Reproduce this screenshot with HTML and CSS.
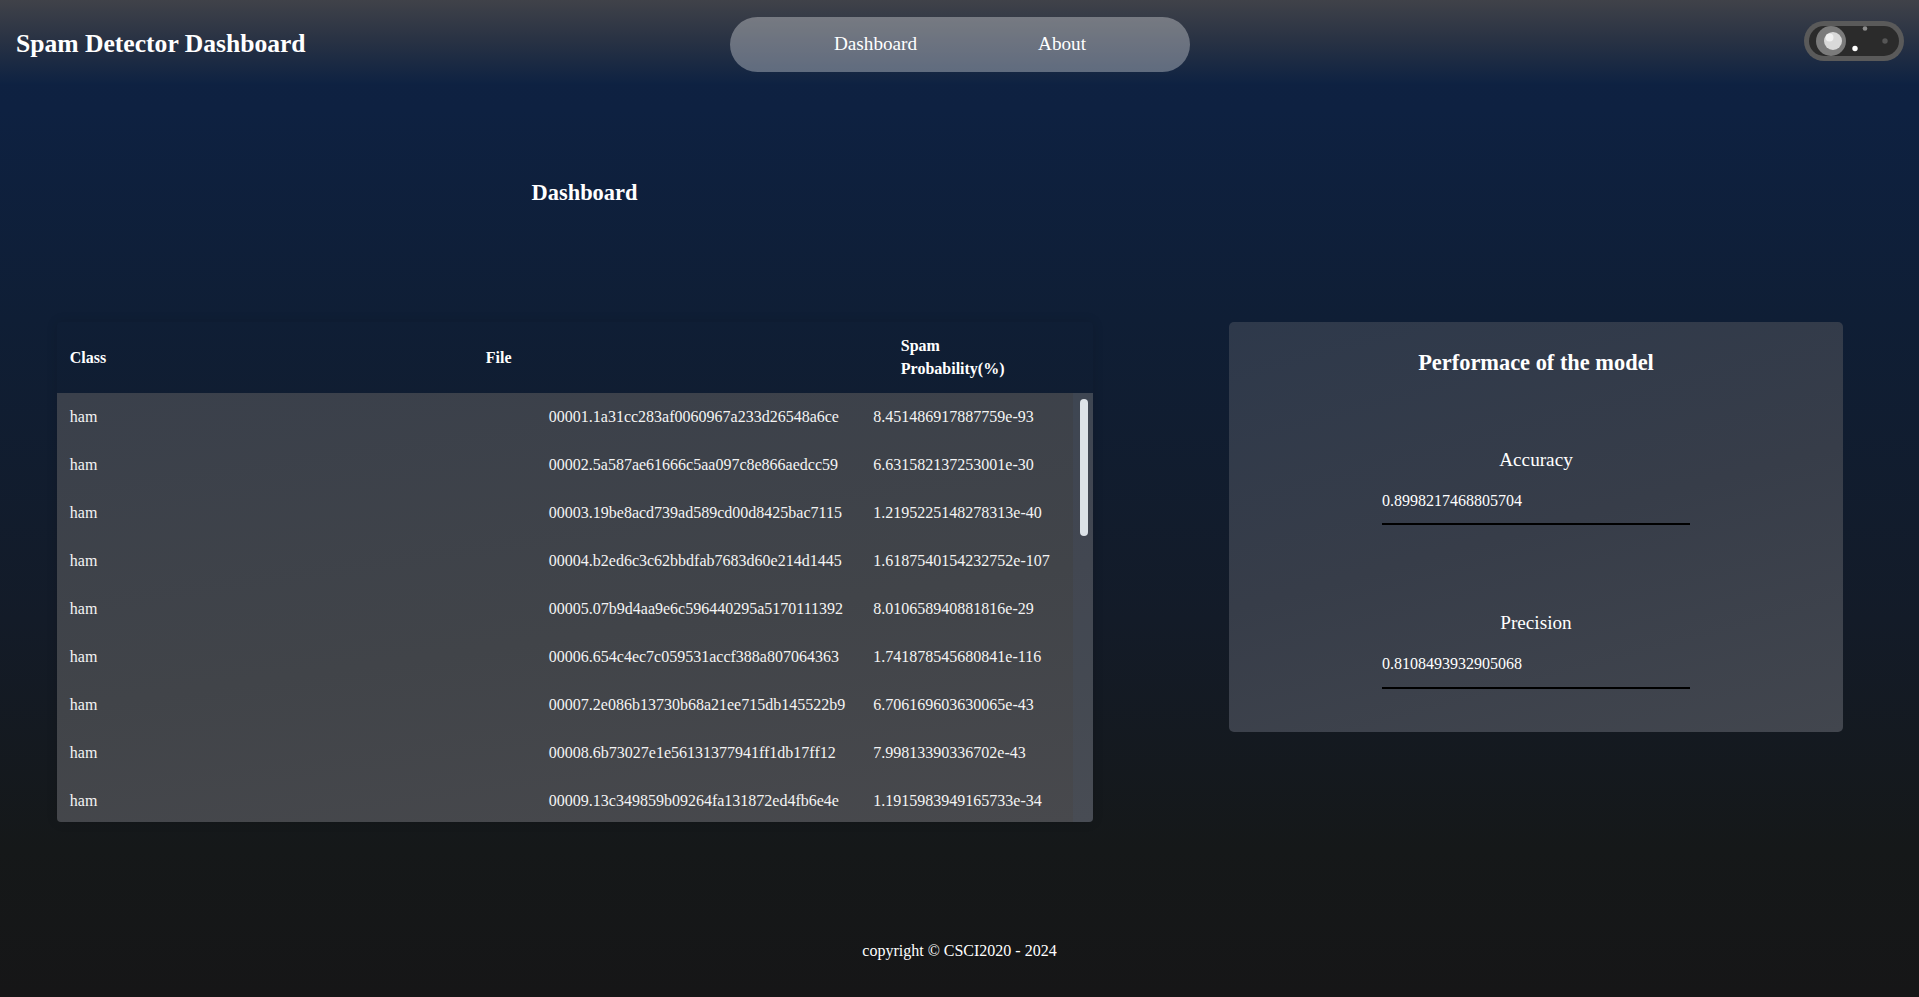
FILE: index.html
```html
<!DOCTYPE html>
<html lang="en">
<head>
<meta charset="utf-8">
<title>Spam Detector Dashboard</title>
<link rel="stylesheet" href="styles.css">
</head>
<body>
<header class="topbar">
  <h1 class="brand">Spam Detector Dashboard</h1>
  <nav class="nav-pill">
    <a href="#" class="nav-link">Dashboard</a>
    <a href="#" class="nav-link">About</a>
  </nav>
  <div class="theme-toggle" aria-label="Toggle theme">
    <svg width="100" height="40" viewBox="0 0 100 40">
      <rect x="0" y="0" width="100" height="40" rx="20" fill="#5a5a5a"/>
      <rect x="5" y="5" width="90" height="30" rx="15" fill="#2b2b2b"/>
      <circle cx="27" cy="20" r="15" fill="#7b7b7b"/>
      <circle cx="29" cy="20" r="9" fill="#d9d9d9"/>
      <circle cx="25.5" cy="16.5" r="4" fill="#f5f5f5" opacity="0.85"/>
      <circle cx="61" cy="7.5" r="2.3" fill="#8c8c8c"/>
      <circle cx="51" cy="27.5" r="2.7" fill="#ffffff"/>
      <circle cx="81" cy="20" r="2.7" fill="#565656"/>
    </svg>
  </div>
</header>

<main class="main">
  <h2 class="page-title">Dashboard</h2>
  <div class="content">
    <section class="table-card">
      <table class="head-table">
        <colgroup><col class="hc1"><col class="hc2"><col></colgroup>
        <thead>
          <tr><th>Class</th><th>File</th><th class="prob-head">Spam Probability(%)</th></tr>
        </thead>
      </table>
      <div class="body-scroll">
        <table class="body-table">
          <colgroup><col class="bc1"><col class="bc2"><col></colgroup>
          <tbody>
            <tr><td>ham</td><td>00001.1a31cc283af0060967a233d26548a6ce</td><td>8.451486917887759e-93</td></tr>
            <tr><td>ham</td><td>00002.5a587ae61666c5aa097c8e866aedcc59</td><td>6.631582137253001e-30</td></tr>
            <tr><td>ham</td><td>00003.19be8acd739ad589cd00d8425bac7115</td><td>1.2195225148278313e-40</td></tr>
            <tr><td>ham</td><td>00004.b2ed6c3c62bbdfab7683d60e214d1445</td><td>1.6187540154232752e-107</td></tr>
            <tr><td>ham</td><td>00005.07b9d4aa9e6c596440295a5170111392</td><td>8.010658940881816e-29</td></tr>
            <tr><td>ham</td><td>00006.654c4ec7c059531accf388a807064363</td><td>1.741878545680841e-116</td></tr>
            <tr><td>ham</td><td>00007.2e086b13730b68a21ee715db145522b9</td><td>6.706169603630065e-43</td></tr>
            <tr><td>ham</td><td>00008.6b73027e1e56131377941ff1db17ff12</td><td>7.99813390336702e-43</td></tr>
            <tr><td>ham</td><td>00009.13c349859b09264fa131872ed4fb6e4e</td><td>1.1915983949165733e-34</td></tr>
          </tbody>
        </table>
        <div class="scroll-track"><div class="scroll-thumb"></div></div>
      </div>
    </section>

    <aside class="perf-card">
      <h2 class="perf-title">Performace of the model</h2>
      <div class="metric metric-first">
        <p class="metric-label">Accuracy</p>
        <div class="metric-value">0.8998217468805704</div>
      </div>
      <div class="metric metric-second">
        <p class="metric-label">Precision</p>
        <div class="metric-value">0.8108493932905068</div>
      </div>
    </aside>
  </div>
</main>

<footer class="footer">copyright © CSCI2020 - 2024</footer>
</body>
</html>
```

FILE: styles.css
```css
html, body {
  margin: 0;
  padding: 0;
}

body {
  font-family: "Liberation Serif", "Times New Roman", serif;
  color: #ffffff;
  min-height: 100vh;
  background: linear-gradient(180deg, #0e2242 0px, #0e2141 110px, #0f1e35 320px, #131b28 620px, #151819 850px, #161617 997px);
  overflow: hidden;
}

/* ---------- Top bar ---------- */
.topbar {
  display: grid;
  grid-template-columns: 1fr auto 1fr;
  align-items: start;
  height: 84px;
  padding: 0 15px 0 16px;
  background: linear-gradient(180deg, #404249 0%, #2a3344 45%, #0e2242 100%);
}

.brand {
  justify-self: start;
  margin: 29px 0 0;
  font-size: 25.6px;
  line-height: 30px;
  font-weight: bold;
  white-space: nowrap;
}

.nav-pill {
  display: flex;
  align-items: center;
  gap: 121px;
  box-sizing: border-box;
  height: 55px;
  margin-top: 17px;
  padding: 0 104px 2px;
  border-radius: 28px;
  background: rgba(255, 255, 255, 0.32);
}

.nav-link {
  color: #ffffff;
  text-decoration: none;
  font-size: 19.2px;
  line-height: 22px;
}

.theme-toggle {
  justify-self: end;
  width: 100px;
  height: 40px;
  margin-top: 21px;
}

.theme-toggle svg {
  display: block;
}

/* ---------- Main ---------- */
.main {
  padding-left: 57px;
}

.page-title {
  box-sizing: border-box;
  width: 1036px;
  margin: 96px 0 0;
  padding-left: 19px;
  text-align: center;
  font-size: 22.4px;
  line-height: 26px;
  font-weight: bold;
}

.content {
  display: grid;
  grid-template-columns: 1036px 614px;
  column-gap: 136px;
  align-items: start;
  margin-top: 116px;
}

/* ---------- Table ---------- */
.table-card {
  box-shadow: 0 0 12px rgba(0, 0, 0, 0.12);
  border-radius: 4px;
}

.head-table,
.body-table {
  width: 100%;
  border-collapse: collapse;
  table-layout: fixed;
  font-size: 16px;
  line-height: 22.4px;
}

.hc1 { width: 416px; }
.hc2 { width: 415px; }

.head-table th {
  padding: 13.3px 12.8px;
  text-align: left;
  font-weight: bold;
  vertical-align: middle;
}

.head-table th.prob-head {
  padding-right: 60px;
}

.body-scroll {
  display: flex;
  align-items: flex-start;
  height: 429px;
  overflow: hidden;
  border-radius: 0 0 4px 4px;
  background: linear-gradient(172deg, #3a404b 0%, #414449 55%, #48494d 100%);
}

.body-table {
  flex: 1 1 auto;
  width: auto;
  min-width: 0;
}

.bc1 { width: 479px; }
.bc2 { width: 324.5px; }

.body-table td {
  padding: 13px 12.8px 12.6px;
  white-space: nowrap;
  color: #f4f4f4;
}

.scroll-track {
  flex: 0 0 20px;
  align-self: stretch;
  box-sizing: border-box;
  padding: 6px 5px 0 7px;
  background: rgba(70, 100, 140, 0.12);
}

.scroll-thumb {
  height: 137px;
  border-radius: 4px;
  background: #dce2e7;
}

/* ---------- Performance card ---------- */
.perf-card {
  box-sizing: border-box;
  padding: 28px 0 43px;
  border-radius: 5px;
  background: linear-gradient(165deg, #2e394b 0%, #373d49 50%, #42464e 100%);
  text-align: center;
}

.perf-title {
  margin: 0;
  font-size: 22.4px;
  line-height: 26px;
  font-weight: bold;
}

.metric-first {
  margin-top: 72.7px;
}

.metric-second {
  margin-top: 86.7px;
}

.metric-label {
  margin: 0 0 20px;
  font-size: 19.2px;
  line-height: 22px;
}

.metric-value {
  box-sizing: content-box;
  width: 308px;
  margin: 0 auto;
  padding-bottom: 12.8px;
  border-bottom: 2px solid #000000;
  text-align: left;
  font-size: 16px;
  line-height: 20px;
}

/* ---------- Footer ---------- */
.footer {
  margin-top: 119px;
  padding-bottom: 26px;
  text-align: center;
  font-size: 16px;
  line-height: 20px;
}
```
